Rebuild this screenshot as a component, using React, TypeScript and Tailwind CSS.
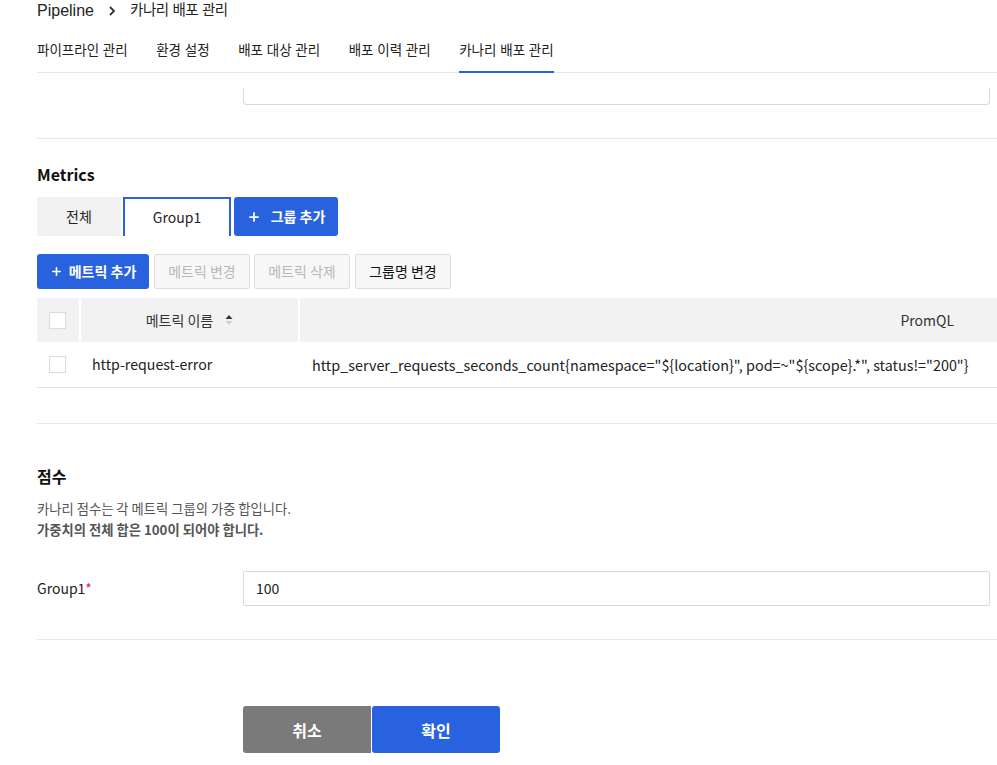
import { Plus } from "lucide-react";

const kr = "font-['Noto_Sans_CJK_KR',sans-serif]";
const head = "font-['Liberation_Sans','Noto_Sans_CJK_KR',sans-serif]";

const navTabs = ["파이프라인 관리", "환경 설정", "배포 대상 관리", "배포 이력 관리", "카나리 배포 관리"];

function Checkbox() {
  return <div className="h-[17px] w-[17px] border border-[#dcdcdc] bg-white" />;
}

export default function App() {
  return (
    <div className={`min-h-[765px] bg-white pl-[37px] text-[#222] ${kr}`}>
      {/* breadcrumb + page tabs */}
      <div className={`flex h-[22px] items-center gap-2 text-[16px] text-[#222] ${head}`}>
        <span>Pipeline</span>
        <svg width="16" height="16" viewBox="0 0 16 16" className="mx-[2px]">
          <path d="M6 4l4 4-4 4" fill="none" stroke="#333" strokeWidth="1.8" />
        </svg>
        <span className="text-[14.5px] tracking-[-0.4px]">카나리 배포 관리</span>
      </div>
      <div className={`mt-[6px] flex gap-[28.5px] border-b border-[#e6e6e6] text-[13.5px] ${head}`}>
        {navTabs.map((t, i) => (
          <div
            key={t}
            className={`-mb-px flex h-[45px] items-center pt-[3px] ${
              i === navTabs.length - 1 ? "border-b-2 border-[#2962df]" : "border-b-2 border-transparent"
            }`}
          >
            {t}
          </div>
        ))}
      </div>

      {/* tail of the input above, scrolled under the header */}
      <div className="mt-[15px] ml-[206px] mr-[7px] h-[17px] rounded-b-sm border-x border-b border-[#d9d9d9]" />

      <div className="mt-[33px] border-t border-[#e8e8e8]" />

      {/* Metrics */}
      <div className="mt-[23px] h-[24px] text-[16px] font-bold leading-[24px] text-[#111]">Metrics</div>
      <div className="mt-[11px] flex h-[39px] text-[14px]">
        <div className="flex w-[84px] items-center justify-center bg-[#f2f2f2]">전체</div>
        <div className="ml-[2px] flex w-[108px] items-center justify-center border-x-2 border-t-2 border-[#2962df] bg-white">
          Group1
        </div>
        <button className="ml-[3px] flex w-[104px] items-center justify-center gap-[10px] rounded-[3px] bg-[#2962df] font-bold text-white">
          <Plus size={14} strokeWidth={3} />
          그룹 추가
        </button>
      </div>

      <div className="mt-[18px] flex h-[35px] text-[14px]">
        <button className="flex w-[112px] items-center justify-center gap-[6px] rounded-[3px] bg-[#2962df] font-bold text-white">
          <Plus size={13} strokeWidth={3} />
          메트릭 추가
        </button>
        <button className="ml-[5px] w-[96px] rounded-[2px] border border-[#dedede] bg-[#f7f7f7] text-[#b8b8b8]">메트릭 변경</button>
        <button className="ml-[4px] w-[96px] rounded-[2px] border border-[#dedede] bg-[#f7f7f7] text-[#b8b8b8]">메트릭 삭제</button>
        <button className="ml-[5px] w-[96px] rounded-[2px] border border-[#dedede] bg-[#f7f7f7] text-[#111]">그룹명 변경</button>
      </div>

      {/* table */}
      <div className="mt-[9px] text-[14px]">
        <div className="flex h-[44px] bg-[#f2f2f2]">
          <div className="flex w-[42px] items-center pl-[12px]">
            <Checkbox />
          </div>
          <div className="flex w-[219px] items-center justify-center gap-[12px] border-l-2 border-white text-[#333]">
            <span>메트릭 이름</span>
            <svg width="8" height="12" viewBox="0 0 8 12">
              <path d="M4 1l3.5 4h-7z" fill="#333" />
              <path d="M4 11l3.5-4h-7z" fill="#d0d0d0" />
            </svg>
          </div>
          <div className="flex flex-1 items-center justify-end border-l-2 border-white pr-[43px] text-[#333]">PromQL</div>
        </div>
        <div className="flex h-[46px] items-center border-b border-[#e2e2e2]">
          <div className="w-[42px] pl-[12px]">
            <Checkbox />
          </div>
          <div className="w-[221px] pl-[13px] text-[14.2px]">http-request-error</div>
          <div className="pl-[12px] text-[14.4px] whitespace-nowrap">
            {'http_server_requests_seconds_count{namespace="${location}", pod=~"${scope}.*", status!="200"}'}
          </div>
        </div>
      </div>

      <div className="mt-[35px] border-t border-[#e8e8e8]" />

      {/* score */}
      <div className="mt-[40px] h-[24px] text-[16px] font-bold leading-[24px] text-[#111]">점수</div>
      <div className="mt-[10px] text-[13.3px] leading-[21px] text-[#555]">
        <p>카나리 점수는 각 메트릭 그룹의 가중 합입니다.</p>
        <p className="font-bold">가중치의 전체 합은 100이 되어야 합니다.</p>
      </div>

      <div className="mt-[31px] flex h-[35px] items-center text-[14px]">
        <label className="w-[206px]">
          Group1<span className="text-[#e0262f]">*</span>
        </label>
        <div className="mr-[7px] flex h-full flex-1 items-center rounded-[2px] border border-[#d9d9d9] pl-[12px]">100</div>
      </div>

      <div className="mt-[33px] border-t border-[#e8e8e8]" />

      <div className="mt-[66px] flex pl-[206px] text-[16px] font-bold text-white">
        <button className="h-[47px] w-[128px] rounded-l-[3px] bg-[#7a7a7a]">취소</button>
        <button className="ml-[1px] h-[47px] w-[128px] rounded-[3px] bg-[#2962df]">확인</button>
      </div>
    </div>
  );
}
